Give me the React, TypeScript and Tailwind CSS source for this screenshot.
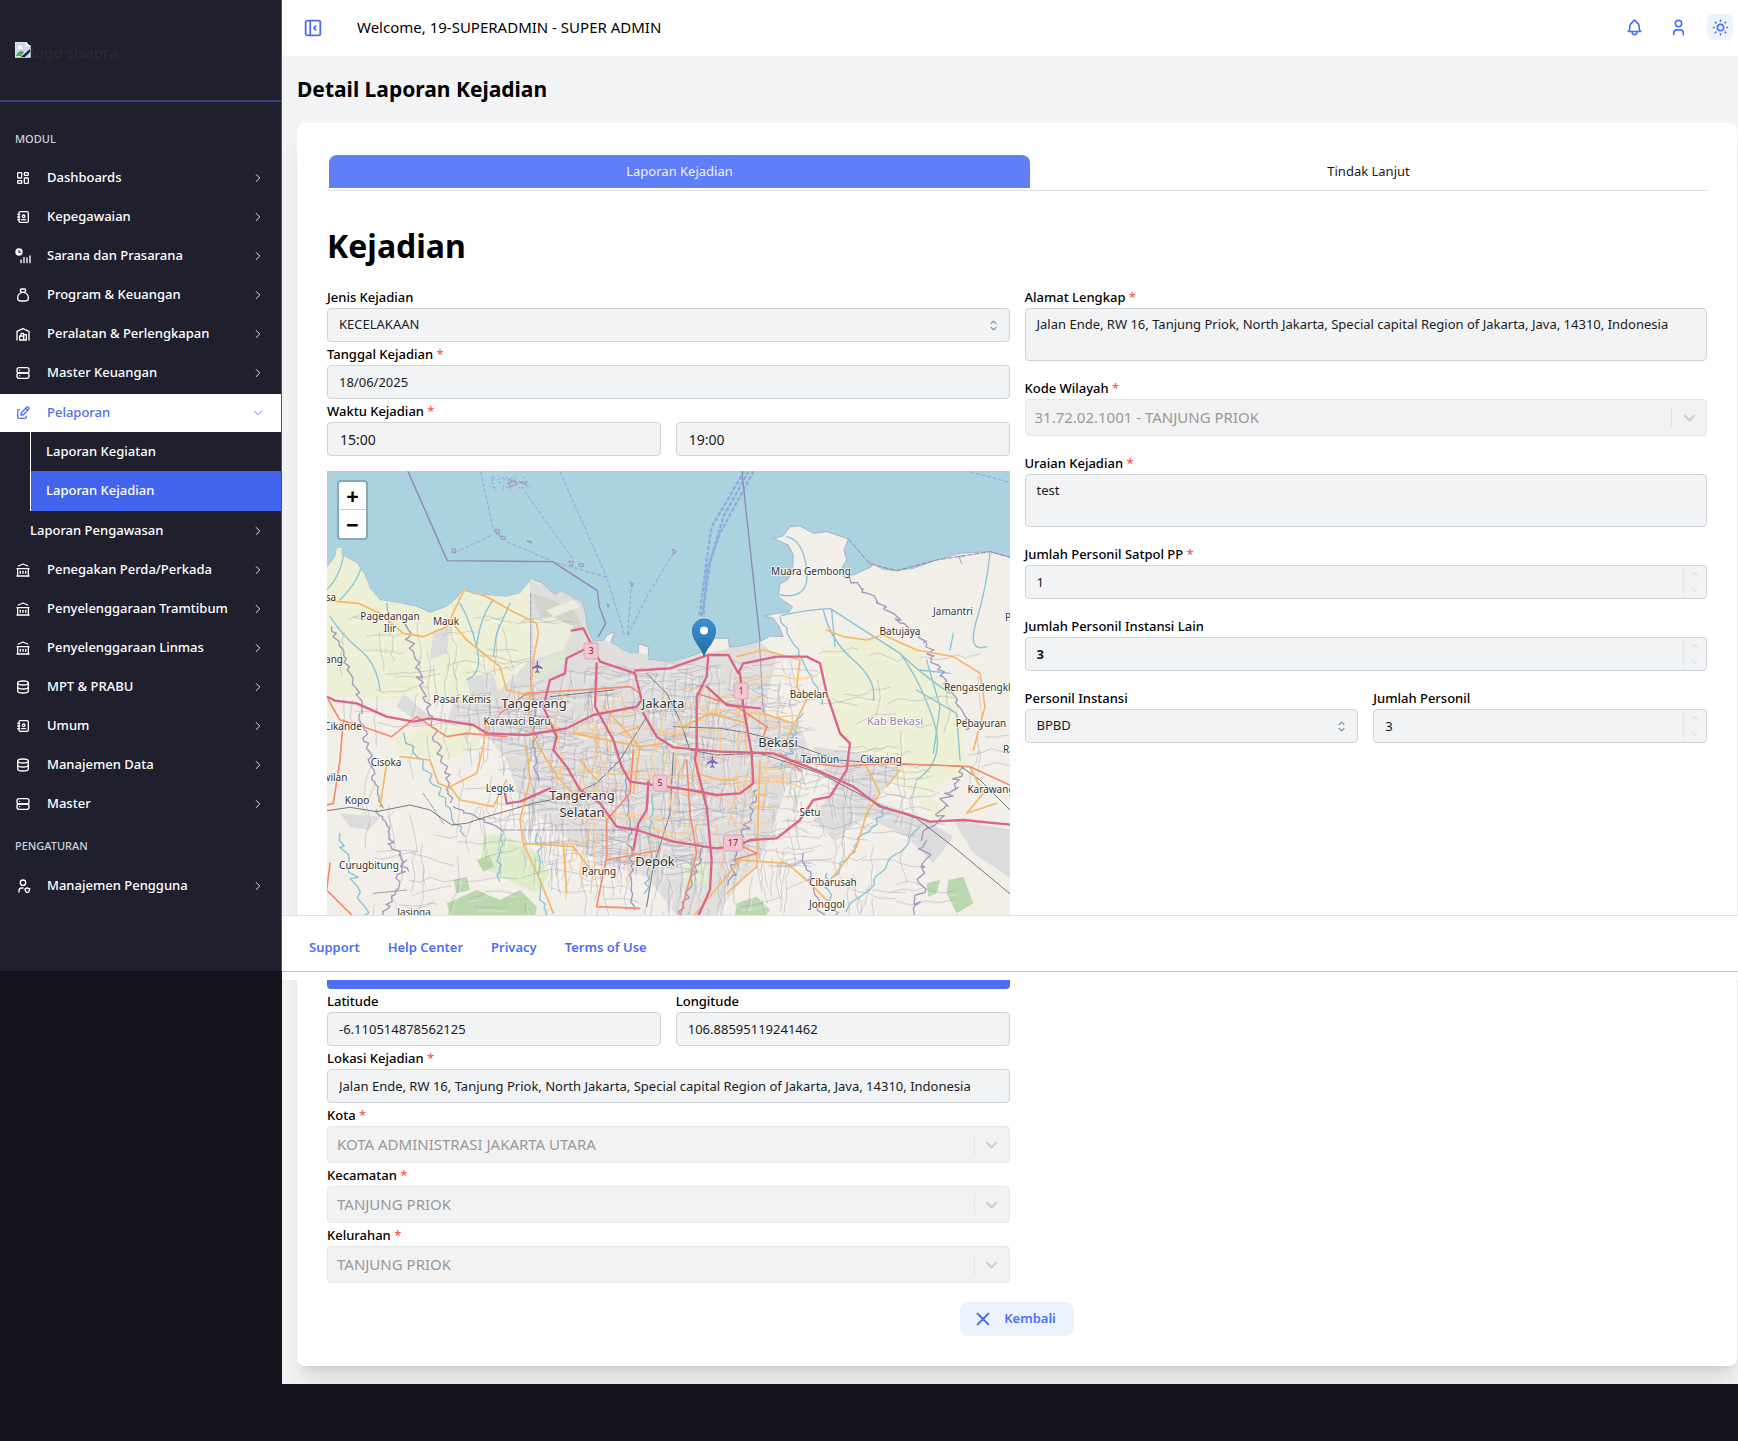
import type { ReactNode } from "react";
import type { IconType } from "react-icons";
import {
  TbAddressBook,
  TbBell,
  TbBuildingBank,
  TbBuildingWarehouse,
  TbChevronDown,
  TbChevronRight,
  TbChevronUp,
  TbDatabase,
  TbEdit,
  TbLayoutDashboard,
  TbLayoutSidebarLeftCollapse,
  TbMoneybag,
  TbSelector,
  TbServer,
  TbSun,
  TbUser,
  TbUserShield,
  TbX,
} from "react-icons/tb";

const ADDRESS =
  "Jalan Ende, RW 16, Tanjung Priok, North Jakarta, Special capital Region of Jakarta, Java, 14310, Indonesia";

/* ---------- Sidebar ---------- */

function TimeBarsIcon({ size = 16 }: { size?: number }) {
  return (
    <svg width={size} height={size} viewBox="0 0 24 24" fill="none" stroke="currentColor" strokeWidth="2" strokeLinecap="round">
      <circle cx="6" cy="6" r="5.5" fill="currentColor" stroke="none" />
      <path d="M6 3.5v2.8h2.4" stroke="#1f1f2d" strokeWidth="1.6" />
      <path d="M9 22v-4M13.5 22v-8M18 22v-7M22.5 22v-10" />
    </svg>
  );
}

type Item = { label: string; icon: IconType | typeof TimeBarsIcon };

const topItems: Item[] = [
  { label: "Dashboards", icon: TbLayoutDashboard },
  { label: "Kepegawaian", icon: TbAddressBook },
  { label: "Sarana dan Prasarana", icon: TimeBarsIcon },
  { label: "Program & Keuangan", icon: TbMoneybag },
  { label: "Peralatan & Perlengkapan", icon: TbBuildingWarehouse },
  { label: "Master Keuangan", icon: TbServer },
];

const bottomItems: Item[] = [
  { label: "Penegakan Perda/Perkada", icon: TbBuildingBank },
  { label: "Penyelenggaraan Tramtibum", icon: TbBuildingBank },
  { label: "Penyelenggaraan Linmas", icon: TbBuildingBank },
  { label: "MPT & PRABU", icon: TbDatabase },
  { label: "Umum", icon: TbAddressBook },
  { label: "Manajemen Data", icon: TbDatabase },
  { label: "Master", icon: TbServer },
];

function NavItem({ item }: { item: Item }) {
  const Icon = item.icon;
  return (
    <button className="flex h-[39px] w-full items-center pr-4 pl-[15px] text-left text-[13px] font-medium text-white">
      <Icon size={16} />
      <span className="ml-4 flex-1">{item.label}</span>
      <TbChevronRight size={14} strokeWidth={1.5} />
    </button>
  );
}

function BrokenImage() {
  return (
    <svg width="16" height="16" viewBox="0 0 16 16" className="shrink-0">
      <path d="M0 0h11l4 4v11H0z" fill="#c9d8f2" />
      <path d="M0 0h11v4h4v11H0z" fill="none" stroke="#e8e8e8" strokeWidth="1.4" />
      <path d="M11 0l4 4h-4z" fill="#fff" />
      <path d="M3 6a2 2 0 0 1 4-1a1.500 1.500 0 0 1 1 2H3z" fill="#fff" />
      <path d="M1 14c2-5 5-6 8-4l-3 4z" fill="#4fa844" />
      <path d="M6 15l9-8v3l-5 5z" fill="#1f1f2d" />
    </svg>
  );
}

function Sidebar() {
  return (
    <aside className="h-[971px] w-[282px] shrink-0 border-r border-[#364fc7] bg-[#1f1f2d]">
      <div className="flex h-[102px] items-center border-b-2 border-[#34437f] px-[15px]">
        <BrokenImage />
        <span className="pt-1 text-[15px] font-medium text-[#2b2b30]">logo sisapra</span>
      </div>
      <nav aria-label="Modul">
        <h2 className="px-[15px] pt-[26px] pb-2 text-[11px] leading-[22px] font-medium text-[#d0d3dc]">MODUL</h2>
        {topItems.map((i) => (
          <NavItem key={i.label} item={i} />
        ))}
        <div className="pt-[2px]">
          <button className="flex h-[38px] w-full items-center bg-white pr-4 pl-[15px] text-left text-[13px] font-medium text-[#4c6ef5]">
            <TbEdit size={16} />
            <span className="ml-4 flex-1">Pelaporan</span>
            <TbChevronDown size={14} strokeWidth={1.5} />
          </button>
          <div className="ml-[30px] border-l border-white text-[13px] font-medium text-white">
            <a href="#kegiatan" className="flex h-[39px] items-center pl-[15px]">Laporan Kegiatan</a>
            <a href="#kejadian" className="flex h-[40px] items-center bg-[#4263eb] pl-[15px]">Laporan Kejadian</a>
          </div>
          <button className="flex h-[39px] w-full items-center pr-4 pl-[30px] text-left text-[13px] font-medium text-white">
            <span className="flex-1">Laporan Pengawasan</span>
            <TbChevronRight size={14} strokeWidth={1.5} />
          </button>
        </div>
        {bottomItems.map((i) => (
          <NavItem key={i.label} item={i} />
        ))}
        <h2 className="px-[15px] pt-3 pb-[9px] text-[11px] leading-[22px] font-medium text-[#d0d3dc]">PENGATURAN</h2>
        <NavItem item={{ label: "Manajemen Pengguna", icon: TbUserShield }} />
      </nav>
    </aside>
  );
}

/* ---------- Map ---------- */

function random(seed: number) {
  let s = seed;
  return () => {
    s = (s * 1664525 + 1013904223) % 4294967296;
    return s / 4294967296;
  };
}

function streets(seed: number, count: number, x: number, y: number, w: number, h: number, step: number) {
  const r = random(seed);
  let d = "";
  for (let i = 0; i < count; i++) {
    d += `M${Math.round(x + r() * w)} ${Math.round(y + r() * h)}`;
    const vertical = r() > 0.5;
    const n = 3 + Math.floor(r() * 4);
    for (let k = 0; k < n; k++) {
      const a = Math.round((0.3 + r()) * step);
      const b = Math.round((r() - 0.5) * step * 0.7);
      d += vertical ? `l${b} ${a}` : `l${a} ${b}`;
    }
  }
  return d;
}

function river(seed: number, x: number, y: number, dx: number, dy: number, n: number, jitter: number) {
  const r = random(seed);
  let d = `M${x} ${y}`;
  for (let i = 1; i <= n; i++) {
    d += `L${Math.round(x + (dx * i) / n + (r() - 0.5) * jitter)} ${Math.round(y + (dy * i) / n + (r() - 0.5) * jitter * 0.5)}`;
  }
  return d;
}

function Label({ x, y, size = 10, color = "#333", children }: { x: number; y: number; size?: number; color?: string; children: ReactNode }) {
  return (
    <text x={x} y={y} fontSize={size} fill={color} textAnchor="middle" stroke="#fff" strokeOpacity="0.75" strokeWidth="2" paintOrder="stroke" strokeLinejoin="round">
      {children}
    </text>
  );
}

function Shield({ x, y, w = 14, children }: { x: number; y: number; w?: number; children: ReactNode }) {
  return (
    <g>
      <rect x={x - w / 2} y={y - 8} width={w} height={16} rx="2" fill="#f3c5d0" stroke="#dba3b3" />
      <text x={x} y={y + 3} fontSize="9" fill="#7c2344" textAnchor="middle">{children}</text>
    </g>
  );
}

const PLANE = "M-2 -16q2 -4 4 0v10l14 9v4l-14 -4v9l5 4v3l-7 -2l-7 2v-3l5 -4v-9l-14 4v-4l14 -9z";

const LAND =
  "M0 340L20 322L45 292L50 265L65 262L65 285L110 308L135 345L150 385L180 420L240 430L290 440L330 458L380 440L415 410L432 385L460 402L500 405L560 410L600 400L625 370L635 358L665 368L680 385L705 405L725 392L785 430L795 460L800 500L818 545L850 542L862 525L885 515L872 545L905 568L930 580L955 580L955 552L985 560L985 600L1060 605L1110 590L1150 575L1150 560L1172 556L1180 535L1225 535L1228 562L1260 560L1320 545L1350 528L1390 530L1378 500L1360 475L1335 468L1370 460L1405 458L1418 440L1395 425L1375 410L1380 372L1405 358L1418 320L1420 285L1405 255L1360 235L1390 228L1410 200L1440 198L1480 220L1520 215L1585 237L1572 270L1580 300L1562 330L1568 345L1600 345L1655 320L1648 305L1690 328L1730 332L1780 325L1850 300L1920 280L2010 275L2080 295V1520H0Z";

const MINOR =
  streets(3, 300, 620, 620, 450, 600, 24) +
  streets(7, 240, 1020, 600, 400, 640, 24) +
  streets(11, 60, 60, 470, 560, 360, 32) +
  streets(19, 36, 150, 850, 500, 500, 44) +
  streets(20, 50, 460, 700, 200, 380, 26) +
  streets(23, 60, 1400, 850, 360, 480, 36) +
  streets(29, 26, 1450, 580, 560, 400, 36) +
  streets(31, 60, 600, 1150, 800, 300, 36);

const MEDIUM = streets(41, 40, 660, 680, 400, 480, 36) + streets(43, 40, 1030, 650, 320, 500, 34);

function Basemap() {
  return (
    <svg className="block h-full w-full" viewBox="0 0 683 484" preserveAspectRatio="xMinYMin slice" role="img" aria-label="Peta lokasi kejadian">
      <defs>
        <linearGradient id="pin" x1="0" y1="0" x2="0" y2="1">
          <stop offset="0" stopColor="#3d93d6" />
          <stop offset="1" stopColor="#216ba5" />
        </linearGradient>
        <clipPath id="land">
          <path d={LAND} />
        </clipPath>
      </defs>
      <rect width="683" height="484" fill="#aad3df" />
      <g transform="translate(-7 -11) scale(0.33333)" fill="none" strokeLinejoin="round" strokeLinecap="round">
        <path d={LAND} fill="#f2efe9" stroke="#9a9cb8" strokeWidth="2" />
        <g clipPath="url(#land)">
          <path d="M0 250H640V640L560 700L380 730L280 720L130 715L0 700ZM220 830L330 790L480 800L470 870L380 900L240 880Z" fill="#eef0d5" />
          <path d="M1500 560L1640 535L1790 560L1840 640L1900 700L1925 800L1940 930L1820 1000L1900 1060L1840 1080L1780 1000L1640 910L1560 830L1530 700Z" fill="#eef0d5" />
          <path d="M1420 470L1530 500L1490 560L1440 540Z" fill="#eff0dc" />
          <path d="M630 360L790 420L810 520L920 570L1060 600L1320 545L1370 590L1330 760L1440 800L1480 900L1400 980L1330 1180L1160 1400L1080 1380L980 1250L840 1210L720 1120L600 1020L560 900L480 800L380 790L400 720L540 690L630 600Z" fill="#e0dedd" />
          <path d="M250 700L330 770L300 790L230 740ZM60 1060L180 1070L150 1110L90 1100ZM1480 860L1620 880L1740 930L1660 1020L1820 1080L1900 1130L1840 1210L1760 1130L1640 1070L1540 1140L1480 1080L1540 980ZM1900 1080L2080 1110V1260L1960 1180ZM340 510L390 500L380 580L330 600ZM440 650L520 640L540 720L460 760Z" fill="#dddcdc" />
          <path d="M640 620L735 570L740 600L660 665L636 665Z" fill="#dfe6cf" />
          <path d="M490 1130L540 1120L640 1170L690 1240L650 1300L560 1260L480 1220ZM1080 1220L1150 1200L1170 1260L1100 1280Z" fill="#dcecc8" />
          <path d="M380 1330L470 1290L540 1320L600 1290L650 1340L640 1400L400 1400ZM1250 1330L1310 1310L1350 1350L1310 1400H1240ZM1820 1270L1860 1260L1850 1300L1825 1310ZM1885 1260L1930 1250L1960 1330L1910 1360L1880 1300ZM470 1200L510 1185L520 1220L490 1235ZM400 1260L440 1250L450 1290L410 1300Z" fill="#add19e" opacity="0.8" />
          <path d="M636 400L700 420L760 450L800 520L740 500L660 480Z" fill="#d3d5cd" />
          <path d="M640 480L700 470L760 500L730 570L640 600ZM680 450L760 420L780 440L700 470Z" fill="#eceddc" />

          <path d={MINOR} stroke="#ffffff" strokeWidth="2" opacity="0.5" transform="translate(7 11)" />
          <path d={MINOR} stroke="#9d97aa" strokeWidth="1.8" opacity="0.65" />

          <g stroke="#88c3d6" strokeWidth="4">
            <path d="M70 290Q60 350 20 390M125 320Q110 370 60 420M30 470Q70 530 120 570T180 690M420 430Q450 480 470 560T440 660M520 420Q480 470 470 560M570 430L530 520L520 590M200 430L210 520" />
            <path d={river(51, 1380, 470, 130, 260, 16, 16)} />
            <path d="M1385 466Q1460 450 1530 445L1740 580Q1800 640 1890 700M1510 450Q1530 540 1600 600T1660 720M1740 580Q1800 660 1840 780T1790 960M1820 600L1860 740L1840 880M1890 640L1800 630M1790 690L1910 760L1920 900M1900 520L1890 570M2010 280Q2000 380 1970 480T2000 560M1400 230Q1450 240 1460 330T1380 405M1535 450L1545 560M1930 290Q1910 280 1925 310" />
            <path d={river(53, 250, 820, 190, 310, 22, 24)} />
            <path d={river(57, 1700, 1040, -170, 220, 18, 22)} />
            <path d={river(59, 1800, 1100, -220, 260, 18, 24)} />
            <path d={river(61, 60, 1120, 90, 280, 18, 34)} />
            <path d={river(63, 650, 1120, 30, 280, 16, 26)} />
            <path d={river(65, 550, 1120, -20, 140, 12, 20)} />
            <path d={river(67, 1520, 1240, 30, 160, 12, 26)} />
            <path d={river(68, 1000, 1000, -20, 300, 20, 16)} />
            <path d={river(69, 1450, 760, -60, 160, 14, 26)} />
          </g>

          <g stroke="#a298bb" strokeWidth="4">
            <path d={river(71, 250, 470, 150, 560, 48, 24)} />
            <path d={river(73, 35, 500, 100, 260, 24, 18)} />
            <path d={river(75, 120, 760, 60, 280, 30, 20)} />
            <path d={river(77, 170, 1050, 90, 180, 22, 30)} />
            <path d={river(78, 260, 1200, -80, 200, 20, 26)} />
            <path d={river(79, 400, 1040, 150, 70, 12, 14)} />
            <path d={river(81, 1570, 340, 250, 210, 34, 26)} />
            <path d={river(82, 1820, 550, 130, 260, 30, 26)} />
            <path d={river(83, 1930, 920, -110, 220, 26, 40)} />
            <path d={river(85, 1820, 1140, -40, 260, 24, 40)} />
            <path d={river(86, 1310, 990, -80, 280, 28, 26)} />
            <path d={river(87, 1150, 1160, -80, 240, 24, 20)} />
            <path d={river(88, 1450, 1180, 60, 200, 20, 20)} />
            <path d={river(89, 640, 700, 10, 260, 20, 16)} />
            <path d={river(90, 920, 950, 20, 400, 34, 18)} />
            <path d="M632 400V700M550 1110H960M310 1000L370 1090" strokeWidth="3" strokeDasharray="14 5" />
            <path d="M1318 540L1330 760L1360 770M160 1300L260 1290" strokeWidth="3" />
          </g>

          <g stroke="#777" strokeWidth="3">
            <path d="M0 1055L90 1042L170 1055L270 1035L330 1050L395 1095L440 1090L500 1070L640 1030L740 1010L830 970L900 900L980 770" />
            <path d="M690 710L880 690M1060 800L1200 805L1290 820L1440 860L1550 900L1690 910L1920 918L1980 960L2080 1060M980 640L1040 700L1080 780L1110 870L1190 885L1320 880L1500 940L1690 1040L1790 1075L1900 1160L2080 1310M1060 880L1050 1060L1000 1220L980 1340" />
          </g>

          <path d={MEDIUM} stroke="#f8c989" strokeWidth="4" opacity="0.9" />
          <g stroke="#f6b765" strokeWidth="5">
            <path d="M0 420L115 430L180 460L250 520L310 530L380 500L432 390L500 410L570 450L650 490L655 520L640 600L625 770L640 830L680 900L720 960L780 1020" />
            <path d="M390 480L440 540L540 620L560 690L640 710M500 780L490 860L470 940L390 980L420 1020L520 1040L560 960M240 890L330 900L355 970L390 985M200 910L180 1040M620 860L630 960L600 1080L610 1150L660 1260L700 1360M610 1150L760 1160L820 1240M760 820L960 860L1030 850M780 900L830 960M730 1150L740 1300" />
            <path d="M1520 510L1570 530L1640 540L1690 525L1790 570L1900 590L1980 640L1995 740L1960 870M1250 590L1330 570L1440 600L1430 680L1460 720L1390 860M1090 800L1170 760L1280 790M1330 760L1420 790M1640 920L1680 1000L1640 1060L1610 1160L1540 1250M1700 980L1740 930M1950 920L1990 1000L1940 1060L2030 1030M1120 1370L1260 1200L1400 1210L1460 1260L1530 1330M1220 1300L1310 1220L1320 900M1130 940L1200 960L1250 960M960 800L900 820M850 740L960 860L940 1000" />
          </g>
          <g stroke="#f58b6c" strokeWidth="5">
            <path d="M25 720L60 780L130 800L215 830L290 770L380 830L440 820L560 830M70 780L60 900L40 1030L0 1040M30 1210L20 1290L100 1370M540 760L620 700L780 690L930 680L960 700M940 870L930 1000L860 1080L860 1190L830 1340L960 1345M860 1200L1020 1170M1130 700L1250 740L1340 800L1330 830M1100 900L1110 1060L1130 1180L1080 1370M1270 1160L1310 1180L1240 1200M1400 900L1560 920L1680 910L1830 915L1950 920L2080 980M1380 880L1440 930" />
          </g>
          <g stroke="#dc6485" strokeWidth="7">
            <path d="M0 700L45 722L110 730L200 770L280 785L330 775L460 795L500 820L620 825L740 805L820 765L950 740L965 720L945 640L840 605L810 545L790 505L755 512" />
            <path d="M790 570L740 595L735 640L690 660L670 740L710 830L700 870L740 920L780 990L840 1030L890 1100L950 1110L1060 1145L1190 1165L1260 1155L1290 1140L1370 1135L1440 1080L1480 1020L1530 1010L1580 930L1590 850L1560 820L1520 700L1500 610L1460 590L1370 590L1270 610L1255 640L1225 585L1165 585L1050 625L945 632" />
            <path d="M830 610L825 740L880 840L905 920L930 965L1110 990L1190 1005L1260 1000L1300 970L1295 880L1270 740L1260 640M1165 585L1160 650L1130 710L1130 860L1125 900L1160 1040L1175 1200L1170 1290L1120 1400M1160 680L1220 735L1320 745M970 760L1010 830L1060 862L1200 875L1360 880L1500 935L1600 980L1680 1040L1770 1065L1830 1085L1930 1080L2080 1095M985 965L980 1050L955 1090L940 1170M555 1000L560 1030L600 1025L690 985" />
          </g>
        </g>

        <g stroke="#9283b5" strokeWidth="4">
          <path d="M262 30L382 302L698 305L832 392L838 440L857 490L835 530" />
          <path d="M1265 30L1320 540" />
          <path d="M1585 237L1650 312L1730 332L1850 300L2010 275L2080 295" strokeWidth="3" strokeDasharray="14 6" />
        </g>
        <g stroke="#7f9fdd" strokeWidth="2.500" strokeDasharray="10 8">
          <path d="M482 35L520 210L560 245L700 305L860 352L915 530M405 278L515 225M720 35L860 352M615 95L760 300M935 370L922 530M1060 280L980 410L922 530M1950 35L2080 70" />
          <path d="M1272 35L1175 200L1160 300L1138 470M1285 35L1210 170L1172 300L1145 470M1300 35L1200 220L1160 330L1150 470" strokeWidth="7" strokeDasharray="7 11" opacity="0.75" />
        </g>
        <g fill="#c5bfcc" stroke="#8c7fa6" strokeWidth="2">
          <path d="M527 208l10 2l2 10l-8 2zM542 228l12 2l2 8l-12 -1zM398 266h8v12h-8zM748 303l12 2l-3 14l-6 -4zM777 311h14v8h-12zM622 243l12 1v5zM1058 268l12 6l-8 8zM932 368l8 2l-3 8zM862 432l6 4l-3 6zM565 68l20 -4l10 8l-25 8zM598 66l22 0l-5 6z" />
        </g>
        <path d={streets(91, 26, 505, 50, 120, 34, 3)} stroke="#6d96c8" strokeWidth="3" strokeDasharray="1 7" />
        <path d={PLANE} transform="translate(652 620)" fill="#7d63b5" />
        <path d={PLANE} transform="translate(1177 905)" fill="#7d63b5" />
      </g>

      <Label x={4} y={130}>sa</Label>
      <Label x={63} y={149}>Pagedangan</Label>
      <Label x={63} y={161}>Ilir</Label>
      <Label x={119} y={154}>Mauk</Label>
      <Label x={7} y={192}>ang</Label>
      <Label x={135} y={232}>Pasar Kemis</Label>
      <Label x={207} y={237} size={13}>Tangerang</Label>
      <Label x={190} y={254}>Karawaci Baru</Label>
      <Label x={336} y={237} size={13}>Jakarta</Label>
      <Label x={16} y={259}>Cikande</Label>
      <Label x={59} y={295}>Cisoka</Label>
      <Label x={8} y={310}>wilan</Label>
      <Label x={173} y={321}>Legok</Label>
      <Label x={30} y={333}>Kopo</Label>
      <Label x={255} y={329} size={13}>Tangerang</Label>
      <Label x={255} y={346} size={13}>Selatan</Label>
      <Label x={42} y={398}>Curugbitung</Label>
      <Label x={272} y={404}>Parung</Label>
      <Label x={328} y={395} size={13}>Depok</Label>
      <Label x={87} y={445}>Jasinga</Label>
      <Label x={484} y={104}>Muara Gembong</Label>
      <Label x={626} y={144}>Jamantri</Label>
      <Label x={681} y={150}>P</Label>
      <Label x={573} y={164}>Batujaya</Label>
      <Label x={482} y={227}>Babelan</Label>
      <Label x={656} y={220}>Rengasdengklok</Label>
      <Label x={568} y={254} size={11} color="#a47fb0">Kab Bekasi</Label>
      <Label x={654} y={256}>Pebayuran</Label>
      <Label x={451} y={276} size={13}>Bekasi</Label>
      <Label x={682} y={282}>Ra</Label>
      <Label x={493} y={292}>Tambun</Label>
      <Label x={554} y={292}>Cikarang</Label>
      <Label x={664} y={322}>Karawang</Label>
      <Label x={483} y={345}>Setu</Label>
      <Label x={506} y={415}>Cibarusah</Label>
      <Label x={500} y={437}>Jonggol</Label>
      <Shield x={264} y={180}>3</Shield>
      <Shield x={414} y={220}>1</Shield>
      <Shield x={333} y={312}>5</Shield>
      <Shield x={406} y={372} w={19}>17</Shield>

      <path d="M377 185C374 176 365.500 170 365.500 159.500A11.500 11.500 0 0 1 388.500 159.500C388.500 170 380 176 377 185Z" fill="url(#pin)" stroke="#2e6c97" strokeWidth="0.800" />
      <circle cx="377" cy="159.500" r="4" fill="#fff" />
    </svg>
  );
}

function MapPanel() {
  return (
    <div className="relative mt-[14px] h-[484px] overflow-hidden bg-[#aad3df]">
      <Basemap />
      <div className="absolute top-[9px] left-[10px] flex w-[31px] flex-col overflow-hidden rounded border-2 border-black/20 bg-white bg-clip-padding text-[22px] font-bold text-black">
        <button aria-label="Perbesar" className="flex h-[28px] items-center justify-center border-b border-[#ccc]">+</button>
        <button aria-label="Perkecil" className="flex h-[28px] items-center justify-center">−</button>
      </div>
    </div>
  );
}

/* ---------- Form ---------- */

const control =
  "block h-[34px] w-full rounded border border-[#ced4da] bg-[#f1f3f5] px-[11px] text-[13px] text-[#1a1b1e] outline-none";

function Field({ id, label, required, children }: { id: string; label: string; required?: boolean; children: ReactNode }) {
  return (
    <div className="min-w-0">
      <label htmlFor={id} className="block text-[13px] leading-[22px] font-medium text-black">
        {label}
        {required && <span className="text-[#fa5252]"> *</span>}
      </label>
      {children}
    </div>
  );
}

function TextField({ id, label, value, required }: { id: string; label: string; value: string; required?: boolean }) {
  return (
    <Field id={id} label={label} required={required}>
      <input id={id} className={control} defaultValue={value} readOnly />
    </Field>
  );
}

function TimeInput({ id, value, label }: { id: string; value: string; label?: string }) {
  return (
    <input
      id={id}
      aria-label={label}
      readOnly
      defaultValue={value}
      className="block h-[34px] w-full rounded border border-[#ced4da] bg-[#f1f3f5] px-3 text-sm text-[#1a1b1e] outline-none"
    />
  );
}

function TextArea({ id, label, value }: { id: string; label: string; value: string }) {
  return (
    <Field id={id} label={label} required>
      <textarea
        id={id}
        readOnly
        defaultValue={value}
        className="block h-[53px] w-full resize-none rounded border border-[#ced4da] bg-[#f1f3f5] px-[11px] py-1 text-[13px] leading-[22px] text-[#1a1b1e] outline-none"
      />
    </Field>
  );
}

function NumberField({ id, label, value, required, bold }: { id: string; label: string; value: string; required?: boolean; bold?: boolean }) {
  return (
    <Field id={id} label={label} required={required}>
      <div className="relative">
        <input id={id} inputMode="numeric" readOnly defaultValue={value} className={bold ? `${control} font-bold` : control} />
        <div className="absolute top-px right-px bottom-px flex w-[23px] flex-col items-center justify-between border-l border-[#e3e6ea] py-[3px] text-[#ced4da]">
          <TbChevronUp size={10} />
          <TbChevronDown size={10} />
        </div>
      </div>
    </Field>
  );
}

function SelectField({ id, label, value }: { id: string; label: string; value: string }) {
  return (
    <Field id={id} label={label}>
      <div className="relative">
        <select id={id} className={`${control} appearance-none`} defaultValue={value}>
          <option>{value}</option>
        </select>
        <TbSelector size={15} className="pointer-events-none absolute top-[10px] right-[9px] text-[#868e96]" />
      </div>
    </Field>
  );
}

function LockedSelect({ id, label, value }: { id: string; label: string; value: string }) {
  return (
    <Field id={id} label={label} required>
      <div className="relative">
        <select
          id={id}
          disabled
          defaultValue={value}
          className="block h-[37px] w-full appearance-none rounded border border-[#e6e6e6] bg-[#f2f2f2] px-[9px] text-[15px] text-[#999] opacity-100"
        >
          <option>{value}</option>
        </select>
        <div className="pointer-events-none absolute top-[8px] right-px bottom-[8px] flex w-[35px] items-center justify-center border-l border-[#e3e3e3] text-[#ccc]">
          <svg width="19" height="19" viewBox="0 0 20 20" fill="currentColor">
            <path d="M4.516 7.548c0.436-0.446 1.043-0.481 1.576 0l3.908 3.747 3.908-3.747c0.533-0.481 1.141-0.446 1.574 0 0.436 0.445 0.408 1.197 0 1.615-0.406 0.418-4.695 4.502-4.695 4.502-0.217 0.223-0.502 0.335-0.787 0.335s-0.570-0.112-0.789-0.335c0 0-4.287-4.084-4.695-4.502s-0.436-1.170 0-1.615z" />
          </svg>
        </div>
      </div>
    </Field>
  );
}

/* ---------- Page ---------- */

function Header() {
  return (
    <header className="flex h-14 items-center bg-white pr-[5px] pl-5 text-[#4c6ef5]">
      <button aria-label="Tutup menu" className="flex size-[22px] items-center justify-center">
        <TbLayoutSidebarLeftCollapse size={22} />
      </button>
      <p className="ml-[33px] flex-1 pb-0.5 text-[15px] text-black">Welcome, 19-SUPERADMIN - SUPER ADMIN</p>
      <div className="flex items-center gap-[18px] pb-0.5">
        <button aria-label="Notifikasi" className="flex size-[26px] items-center justify-center">
          <TbBell size={19} />
        </button>
        <button aria-label="Profil" className="flex size-[26px] items-center justify-center">
          <TbUser size={19} />
        </button>
        <button aria-label="Tema" className="-ml-[2px] flex size-[26px] items-center justify-center rounded-md bg-[#edf2ff]">
          <TbSun size={19} />
        </button>
      </div>
    </header>
  );
}

const footerLinks = ["Support", "Help Center", "Privacy", "Terms of Use"];

function FooterBar() {
  return (
    <footer className="absolute top-[915px] right-0 left-0 h-[65px] bg-white">
      <div className="flex h-[57px] items-center gap-7 border-t border-b border-t-[#dee2e6] border-b-[#bdbdbd] px-[27px] pt-2">
        {footerLinks.map((l) => (
          <a key={l} href="#footer" className="text-[13px] font-semibold text-[#4c6ef5]">
            {l}
          </a>
        ))}
      </div>
    </footer>
  );
}

export default function App() {
  return (
    <div className="flex min-h-screen items-start bg-[#14141f] font-['Noto_Sans',sans-serif]">
      <Sidebar />
      <div className="relative min-w-0 flex-1 bg-[#f1f3f5]">
        <Header />
        <main className="px-[15px] pb-[18px]">
          <h1 className="pt-[17px] pb-[18px] text-[21px] leading-8 font-bold text-black">Detail Laporan Kejadian</h1>
          <section className="-mr-[14px] rounded-lg bg-white p-[30px] shadow-xl">
            <div role="tablist" className="flex border-b border-[#dee2e6] pt-[2px] pb-[2px] pl-[2px] text-[13px]">
              <button role="tab" aria-selected="true" className="h-[33px] flex-auto rounded-t-lg bg-[#5f7ef7] text-[#f1f3ff]">
                Laporan Kejadian
              </button>
              <button role="tab" aria-selected="false" className="h-[33px] flex-auto text-[#1a1b1e]">
                Tindak Lanjut
              </button>
            </div>
            <h2 className="pt-[33px] pb-[18px] text-[32px] leading-[44px] font-bold text-black">Kejadian</h2>
            <div className="grid grid-cols-2 items-start gap-[15px]">
              <div className="flex flex-col gap-px">
                <SelectField id="jenis" label="Jenis Kejadian" value="KECELAKAAN" />
                <TextField id="tanggal" label="Tanggal Kejadian" value="18/06/2025" required />
                <div className="grid grid-cols-2 items-end gap-[15px]">
                  <Field id="mulai" label="Waktu Kejadian" required>
                    <TimeInput id="mulai" value="15:00" />
                  </Field>
                  <TimeInput id="selesai" value="19:00" label="Waktu selesai" />
                </div>
                <div>
                  <MapPanel />
                  <button aria-label="Cari lokasi" className="block h-[34px] w-full rounded bg-[#4c6ef5]" />
                </div>
                <div className="grid grid-cols-2 gap-[15px]">
                  <TextField id="lat" label="Latitude" value="-6.110514878562125" />
                  <TextField id="lng" label="Longitude" value="106.88595119241462" />
                </div>
                <TextField id="lokasi" label="Lokasi Kejadian" value={ADDRESS} required />
                <LockedSelect id="kota" label="Kota" value="KOTA ADMINISTRASI JAKARTA UTARA" />
                <LockedSelect id="kecamatan" label="Kecamatan" value="TANJUNG PRIOK" />
                <LockedSelect id="kelurahan" label="Kelurahan" value="TANJUNG PRIOK" />
              </div>
              <div className="flex flex-col gap-4">
                <TextArea id="alamat" label="Alamat Lengkap" value={ADDRESS} />
                <LockedSelect id="kode" label="Kode Wilayah" value="31.72.02.1001 - TANJUNG PRIOK" />
                <TextArea id="uraian" label="Uraian Kejadian" value="test" />
                <NumberField id="satpol" label="Jumlah Personil Satpol PP" value="1" required />
                <NumberField id="lain" label="Jumlah Personil Instansi Lain" value="3" bold />
                <div className="grid grid-cols-2 gap-[15px]">
                  <SelectField id="instansi" label="Personil Instansi" value="BPBD" />
                  <NumberField id="jumlah" label="Jumlah Personil" value="3" />
                </div>
              </div>
            </div>
            <div className="flex justify-center pt-[19px]">
              <button className="flex h-[34px] items-center gap-[10px] rounded-lg bg-[#edf2ff] pr-[18px] pl-3 text-[13px] font-semibold text-[#4c6ef5]">
                <TbX size={22} />
                Kembali
              </button>
            </div>
          </section>
        </main>
        <FooterBar />
      </div>
    </div>
  );
}
